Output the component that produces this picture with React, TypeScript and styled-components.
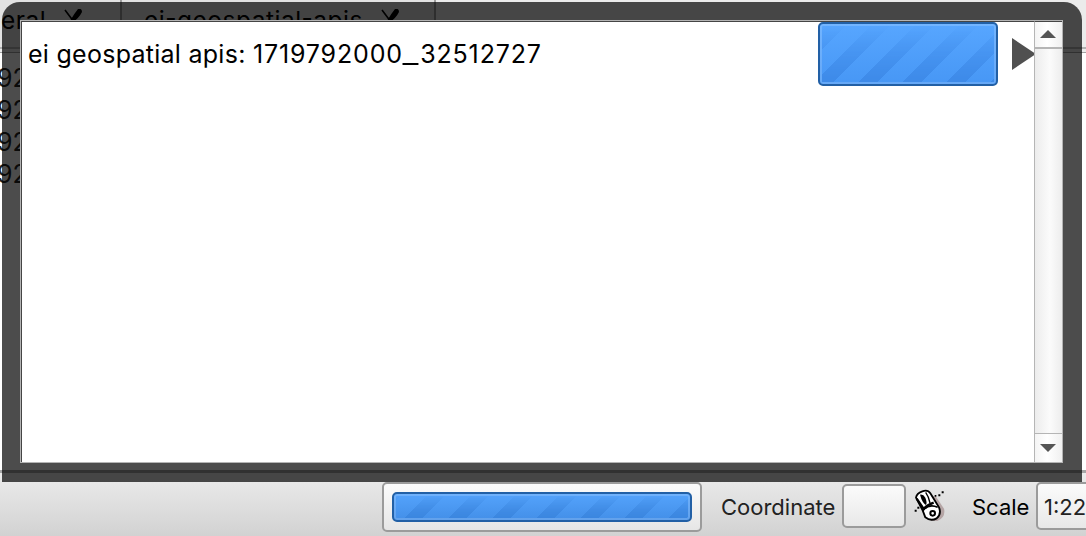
import React from "react";
import styled, { createGlobalStyle } from "styled-components";

const GlobalStyle = createGlobalStyle`
  *, *::before, *::after { box-sizing: border-box; }
  html, body { margin: 0; overflow: hidden; }
  body { font-family: Inter, "Liberation Sans", sans-serif; color: #000; }
`;

const Window = styled.main`
  position: relative;
  display: flex;
  flex-direction: column;
  width: 1086px;
  height: 536px;
  overflow: hidden;
  background: #fff;
`;

const TabBar = styled.header`
  display: flex;
  flex: none;
  height: 53px;
  padding-bottom: 2px;
  background: #ebebeb;
  border-bottom: 1px solid #a2a2a2;
`;

const Tabs = styled.div`
  display: flex;
  flex: 1;
  height: 49px;
  border-bottom: 2px solid #b2b2b2;
`;

const Tab = styled.div<{ $width: number; $inset: number }>`
  display: flex;
  align-items: flex-start;
  gap: 18px;
  width: ${(p) => p.$width}px;
  padding: 4px 0 0 ${(p) => p.$inset}px;
  border-right: 2px solid #9c9c9c;
  background: #e2e2e2;
  font-size: 24.5px;
  line-height: 32px;
  letter-spacing: 0.5px;
  white-space: nowrap;
`;

const Hyphen = styled.span`
  display: inline-block;
  transform: translateY(-2px);
`;

const TabClose = styled.svg`
  flex: none;
  width: 20px;
  height: 22px;
  margin-top: 5px;
`;

const LogList = styled.ul`
  flex: 1;
  margin: 0;
  padding: 9px 0 0;
  list-style: none;
`;

const LogRow = styled.li`
  height: 32px;
  margin-left: -3px;
  color: #222;
  font-size: 25px;
  line-height: 32px;
`;

const StatusBar = styled.footer`
  display: flex;
  flex: none;
  align-items: flex-start;
  height: 66px;
  padding: 9px 0 0 382px;
  border-top: 3px solid #a6a6a6;
  background: linear-gradient(#ececec, #e7e7e7 18%, #d2d2d2);
  font-size: 22px;
  line-height: 50px;
  white-space: nowrap;
`;

const ProgressFrame = styled.div`
  flex: none;
  width: 320px;
  height: 50px;
  padding: 8px;
  border: 2px solid #9b9b9b;
  border-radius: 5px;
  background: linear-gradient(#fbfbfb, #e6e6e6);
`;

const Progress = styled.div<{ $width: number; $height: number; $stripes: string; $tone: string }>`
  position: relative;
  flex: none;
  width: ${(p) => p.$width}px;
  height: ${(p) => p.$height}px;
  border: 2px solid #2260a6;
  border-radius: 5px;
  overflow: hidden;
  background: ${(p) => p.$tone};
  box-shadow: inset 0 0 0 2px rgba(255, 255, 255, 0.17);

  &::after {
    content: "";
    position: absolute;
    inset: 2px;
    background: repeating-linear-gradient(135deg, ${(p) => p.$stripes});
    mask-image: linear-gradient(transparent, #000);
  }
`;

const Label = styled.span<{ $before: number; $width: number; $color: string }>`
  flex: none;
  width: ${(p) => p.$width}px;
  margin-left: ${(p) => p.$before}px;
  color: ${(p) => p.$color};
`;

const CoordinateField = styled.div`
  flex: none;
  width: 64px;
  height: 44px;
  margin: 2px 0 0 8px;
  border: 2px solid #9b9b9b;
  border-radius: 5px;
  background: linear-gradient(#fbfbfb, #e8e8e8);
`;

const MouseIcon = styled.svg`
  flex: none;
  width: 32px;
  height: 33px;
  margin: 7px 0 0 8px;
`;

const ScaleField = styled.div`
  flex: none;
  width: 110px;
  height: 48px;
  margin-left: 8px;
  padding-left: 6px;
  border: 2px solid #9b9b9b;
  border-radius: 5px;
  background: linear-gradient(#fbfbfb, #e8e8e8);
  color: #222;
  line-height: 46px;
`;

const Popup = styled.section`
  position: absolute;
  top: 2px;
  left: 2px;
  width: 1080px;
  height: 480px;
  padding: 18px 19px 19px 18px;
  border-radius: 18px 18px 0 0;
  background: rgba(0, 0, 0, 0.7);
`;

const Panel = styled.div`
  display: flex;
  height: 100%;
  border: 1px solid #b4b4b4;
  background: #fff;
`;

const TaskArea = styled.div`
  flex: 1;
  border: solid #454545;
  border-width: 1px 0 0 1px;
`;

const TaskRow = styled.div`
  display: flex;
  height: 64px;
  padding-left: 6px;
`;

const TaskName = styled.span`
  width: 790px;
  font-size: 25px;
  line-height: 64px;
  letter-spacing: 0.27px;
  white-space: nowrap;
`;

const TaskId = styled.span`
  letter-spacing: 0.85px;
`;

const Underscore = styled.span`
  display: inline-block;
  margin: 0 3px 0 2px;
  transform: scaleX(1.4);
`;

const Expand = styled.svg`
  flex: none;
  width: 22px;
  height: 32px;
  margin: 16px 0 0 14px;
`;

const ScrollBar = styled.div`
  display: flex;
  flex-direction: column;
  justify-content: space-between;
  width: 28px;
  border-top: 1px solid #454545;
  border-left: 1px solid #b5b5b5;
  background: linear-gradient(90deg, #ececec, #fbfbfb 55%, #ededed);
`;

const ScrollButton = styled.div<{ $end?: boolean }>`
  display: flex;
  align-items: center;
  justify-content: center;
  height: ${(p) => (p.$end ? 29 : 27)}px;
  padding: 0 1px ${(p) => (p.$end ? 0 : 2)}px 0;
  border: 0 solid #b5b5b5;
  border-width: ${(p) => (p.$end ? "1px 0 0" : "0 0 2px")};
  background: linear-gradient(90deg, #f4f4f4, #fff 45%, #f0f0f0);
`;

const Cross = () => (
  <TabClose viewBox="0 0 20 22">
    <path d="M1 1 L10 13 L18 22" stroke="#000" strokeWidth="1.6" fill="none" />
    <path d="M14 0 Q18 -1 18 3 Q15 9 9 13 L2 21 Q6 10 14 0Z" />
  </TabClose>
);

const Arrow = ({ down }: { down?: boolean }) => (
  <svg width="16" height="8" viewBox="0 0 16 8">
    <path d={down ? "M0 0H16L8 8Z" : "M0 8H16L8 0Z"} fill="#555" />
  </svg>
);

export default function App() {
  return (
    <>
      <GlobalStyle />
      <Window>
        <TabBar>
          <Tabs>
            <Tab $width={122} $inset={1}>
              eral <Cross />
            </Tab>
            <Tab $width={314} $inset={22}>
              <span>
                ei<Hyphen>-</Hyphen>geospatial<Hyphen>-</Hyphen>apis
              </span>
              <Cross />
            </Tab>
          </Tabs>
        </TabBar>
        <LogList>
          {[0, 1, 2, 3].map((row) => (
            <LogRow key={row}>92</LogRow>
          ))}
        </LogList>
        <StatusBar>
          <ProgressFrame>
            <Progress
              $width={300}
              $height={30}
              $tone="linear-gradient(#54a3fc, #438fe8)"
              $stripes="#3b86df 0 3.5px, transparent 3.5px 21.5px, #3b86df 21.5px 31.11px"
            />
          </ProgressFrame>
          <Label $before={19} $width={113} $color="#222">Coordinate</Label>
          <CoordinateField />
          <MouseIcon viewBox="252 57 96 99">
            <path d="M306 78 L318 80 L342 116 Q348 142 322 153 L302 152 Z" fill="#b5a5a5" />
            <path
              d="M258 83 Q260 70 277 64 Q293 58 301 70 L327 112 Q335 132 320 145 Q302 155 286 142 L278 121 Z"
              fill="#fff"
              stroke="#000"
              strokeWidth="5.5"
            />
            <path d="M260 86 L281 117 Q292 104 311 98" fill="none" stroke="#000" strokeWidth="7" />
            <path d="M279 121 Q298 100 323 112" fill="none" stroke="#000" strokeWidth="5" />
            <path d="M270 74 Q280 72 286 83 Q292 97 288 105 Q277 99 270 74Z" />
            <path d="M287 67 Q296 79 300 99" fill="none" stroke="#000" strokeWidth="4" />
            <circle cx="308" cy="130" r="7" fill="#fff" stroke="#000" strokeWidth="6" />
            <path d="M254 119h6v6h-6zM262 110h6v6h-6zM314 75h5v5h-5zM325 73h6v6h-6zM335 64h6v6h-6z" />
          </MouseIcon>
          <Label $before={26} $width={56} $color="#000">Scale</Label>
          <ScaleField>1:22</ScaleField>
        </StatusBar>
        <Popup>
          <Panel>
            <TaskArea>
              <TaskRow>
                <TaskName>
                  ei geospatial apis:{" "}
                  <TaskId>
                    1719792000<Underscore>_</Underscore>32512727
                  </TaskId>
                </TaskName>
                <Progress
                  $width={180}
                  $height={64}
                  $tone="linear-gradient(#57a6ff, #4797f5)"
                  $stripes="transparent 0 3px, #3e8ae8 3px 16.8px, transparent 16.8px 31.11px"
                />
                <Expand viewBox="0 0 22 32">
                  <path d="M0 0L24 16L0 32Z" fill="#505050" />
                </Expand>
              </TaskRow>
            </TaskArea>
            <ScrollBar>
              <ScrollButton><Arrow /></ScrollButton>
              <ScrollButton $end><Arrow down /></ScrollButton>
            </ScrollBar>
          </Panel>
        </Popup>
      </Window>
    </>
  );
}
